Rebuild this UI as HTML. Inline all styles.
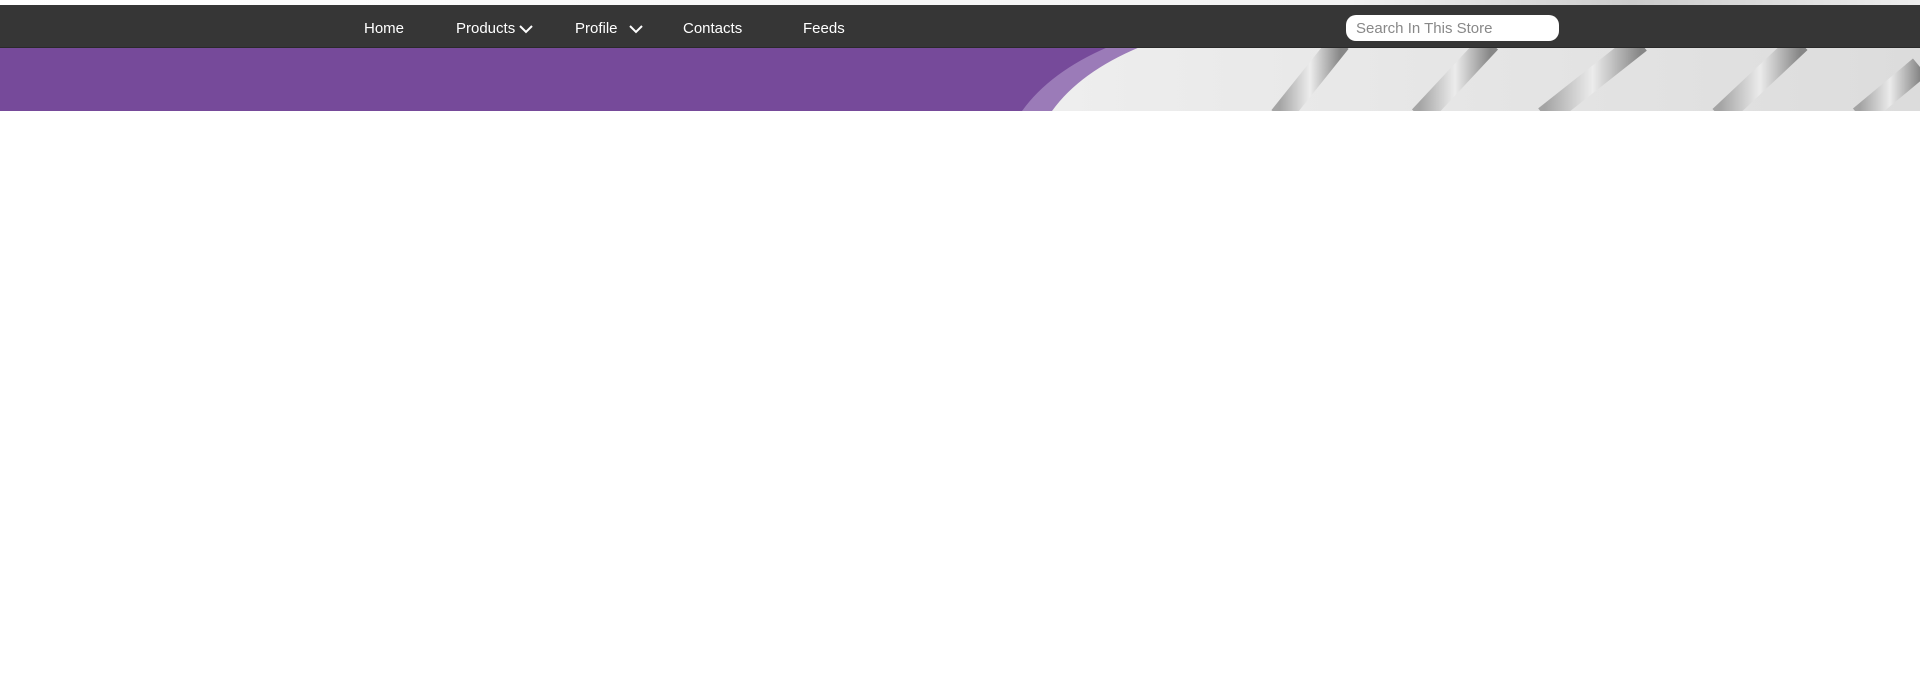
<!DOCTYPE html>
<html><head><style>
body{margin:0;width:1920px;height:680px;background:#fff;overflow:hidden;font-family:"Liberation Sans",Arial,sans-serif;position:relative}
.top{position:absolute;left:0;top:0;width:1920px;height:5px;background:linear-gradient(90deg,#fff 0%,#f2f2f2 70%,#ccc 85%,#eee 100%)}
.banner{position:absolute;left:0;top:47px;width:1920px;height:64px;background:linear-gradient(90deg,#e8e8e8,#f4f4f4 40%,#dcdcdc)}
.nav{position:absolute;left:0;top:5px;width:1920px;height:42px;background:#363636;border-bottom:1px solid #2a2a2a}
.nav span{position:absolute;top:15px;color:#fff;font-size:15px}
.chev{position:absolute;top:19px}
.search{position:absolute;left:1346px;top:15px;width:213px;height:26px;background:#fff;border-radius:10px;color:#888;font-size:15px;line-height:27px;text-indent:10px}
</style></head><body>
<div class="top"></div>
<div class="banner">
<svg width="1920" height="64" style="position:absolute;left:0;top:0">
<defs><linearGradient id="m" x1="0" x2="1"><stop offset="0" stop-color="#9a9a9a"/><stop offset=".5" stop-color="#eee"/><stop offset="1" stop-color="#777"/></linearGradient></defs>
<g stroke="url(#m)" stroke-width="22" opacity=".85">
<line x1="1280" y1="70" x2="1340" y2="-5"/>
<line x1="1420" y1="70" x2="1490" y2="-5"/>
<line x1="1545" y1="70" x2="1640" y2="-5"/>
<line x1="1720" y1="70" x2="1800" y2="-5"/>
<line x1="1860" y1="70" x2="1920" y2="20"/>
</g>
<path d="M0 0 H1140 Q1080 25 1052 64 H0 Z" fill="#9b7bb8"/>
<path d="M0 0 H1108 Q1050 25 1022 64 H0 Z" fill="#764a9a"/>
</svg>
</div>
<div class="nav">
<span style="left:364px">Home</span>
<span style="left:456px">Products</span>
<svg class="chev" style="left:518px" width="16" height="10"><path d="M2 2 L8 8 L14 2" stroke="#fff" stroke-width="2" fill="none"/></svg>
<span style="left:575px">Profile</span>
<svg class="chev" style="left:628px" width="16" height="10"><path d="M2 2 L8 8 L14 2" stroke="#fff" stroke-width="2" fill="none"/></svg>
<span style="left:683px">Contacts</span>
<span style="left:803px">Feeds</span>
<div class="search" style="top:10px">Search In This Store</div>
</div>
</body></html>
